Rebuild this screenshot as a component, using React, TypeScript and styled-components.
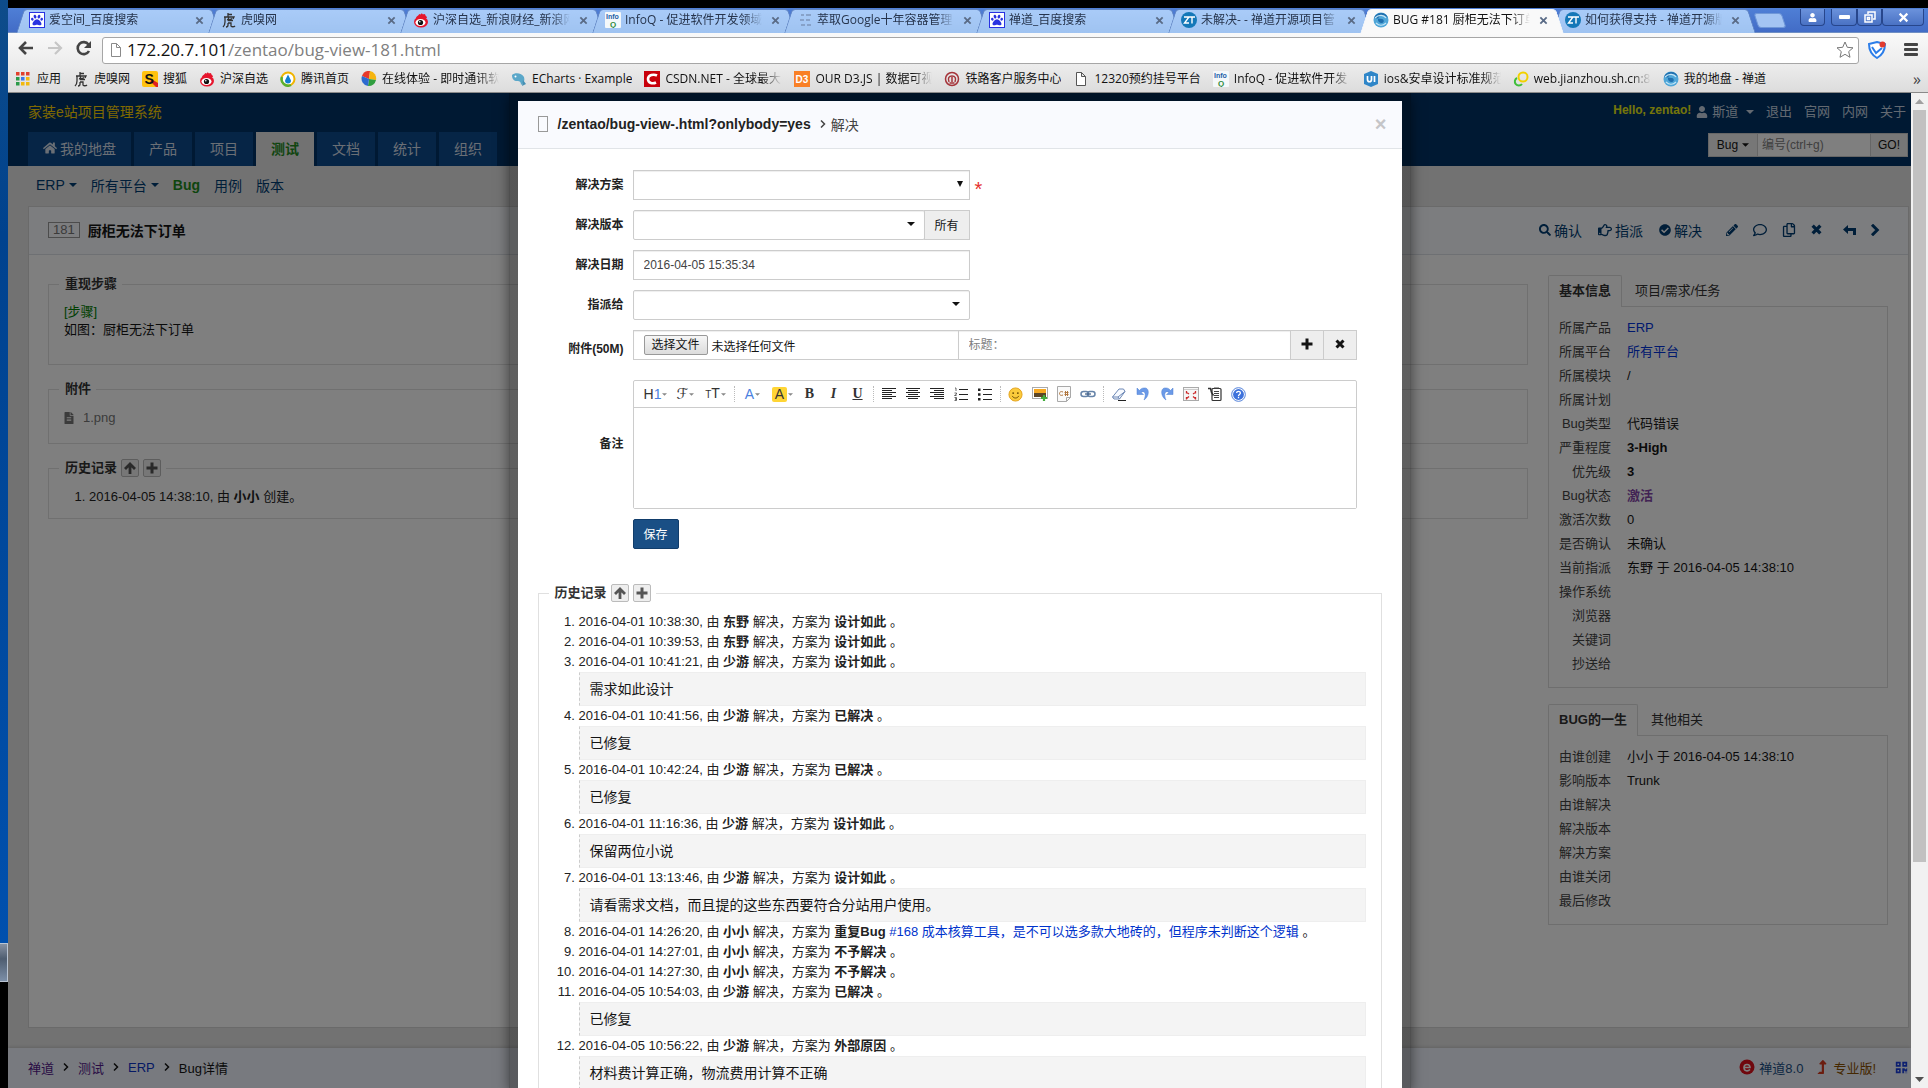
import React, { useRef } from "react";
import styled, { createGlobalStyle, css } from "styled-components";
import {
  FaHome, FaUser, FaSearch, FaRegHandPointRight, FaCheckCircle, FaPencilAlt, FaRegComment,
  FaRegCopy, FaFileAlt, FaPaw, FaLevelUpAlt, FaQrcode,
} from "react-icons/fa";

const Global = createGlobalStyle`
  *, *::before, *::after { box-sizing: border-box; }
  body { margin: 0; background: #000; font-family: "Liberation Sans", "Noto Sans CJK SC", sans-serif; font-size: 13px; color: #141414; }
  button, input, select, textarea { font-family: inherit; font-size: 12px; color: inherit; margin: 0; }
  ul, ol, p, h1, h2 { margin: 0; padding: 0; }
  a { text-decoration: none; color: inherit; }
  svg { flex-shrink: 0; }
`;

/* ---------- desktop and browser window ---------- */

const Screen = styled.div`
  display: flex;
  height: 100vh;
  overflow: hidden;
  background: #000;
`;
const Desktop = styled.div`
  flex: 0 0 8px;
  display: flex;
  flex-direction: column;
`;
const Wallpaper = styled.div`
  flex: 1;
  background: linear-gradient(#0e4c8a, #00428e 25%, #0050ae);
`;
const TaskButton = styled.div`
  height: 39px;
  border: 1px solid #b9c4d2;
  border-left: 0;
  background: linear-gradient(#8792a3, #4e5d70 40%, #7c8fa8);
`;
const TaskbarEnd = styled.div`
  height: 106px;
  background: #000;
`;
const Browser = styled.div`
  flex: 1;
  min-width: 0;
  display: flex;
  flex-direction: column;
  padding-top: 8px;
  font-family: "Open Sans", "Noto Sans CJK SC", sans-serif;
  font-size: 12px;
`;
const TabStrip = styled.div`
  display: flex;
  justify-content: space-between;
  height: 25px;
  padding: 1px 4px 0 8px;
  background: linear-gradient(#4f7fd6, #426cc6);
  border-bottom: 1px solid #6f8fc4;
`;
const TabList = styled.div`
  display: flex;
  flex: 1;
  min-width: 0;
`;
const skewSide = css<{ $active?: boolean }>`
  content: "";
  position: absolute;
  z-index: -1;
  top: 0;
  bottom: ${(p) => (p.$active ? "-1px" : "0")};
  border: 1px solid ${(p) => (p.$active ? "#f4f6fa" : "#6387c4")};
  border-bottom: 0;
  background: ${(p) => (p.$active ? "#f9f9f9" : "linear-gradient(#a9cbf8, #9fc3f1)")};
`;
const BrowserTab = styled.div<{ $active?: boolean }>`
  position: relative;
  z-index: ${(p) => (p.$active ? 2 : 1)};
  display: flex;
  align-items: center;
  flex: 0 1 204px;
  width: 204px;
  height: 24px;
  margin-right: -12px;
  padding: 0 16px 2px 13px;
  color: ${(p) => (p.$active ? "#111" : "#26344c")};
  &::before {
    ${skewSide}
    left: 4px;
    right: 40%;
    border-right: 0;
    border-top-left-radius: 4px;
    transform: skewX(-18deg);
  }
  &::after {
    ${skewSide}
    left: 40%;
    right: 4px;
    border-left: 0;
    border-top-right-radius: 4px;
    transform: skewX(18deg);
  }
`;
const TabTitle = styled.span`
  flex: 1;
  min-width: 0;
  margin: 0 8px 0 4px;
  overflow: hidden;
  white-space: nowrap;
  line-height: 20px;
  mask-image: linear-gradient(to right, #000 calc(100% - 18px), transparent);
`;
const TabClose = styled.button`
  display: flex;
  align-items: center;
  justify-content: center;
  width: 10px;
  height: 14px;
  padding: 0;
  border: 0;
  background: none;
  color: #5a6b86;
`;
const NewTab = styled.button`
  align-self: center;
  width: 28px;
  height: 15px;
  margin-left: 12px;
  border: 1px solid #6f97d8;
  border-radius: 3px;
  background: #a3c4f3;
  transform: skewX(18deg);
`;
const WindowButtons = styled.div`
  display: flex;
  height: 17px;
  color: #fff;
`;
const WindowButton = styled.button<{ $w: number; $gap?: boolean }>`
  width: ${(p) => p.$w}px;
  margin-right: ${(p) => (p.$gap ? 6 : 0)}px;
  padding: 0;
  border: 1px solid #27468c;
  border-top: 0;
  border-radius: 0 0 4px 4px;
  background: linear-gradient(#6b92dc, #4a72c4);
  color: #fff;
  display: flex;
  align-items: center;
  justify-content: center;
`;
const Toolbar = styled.div`
  display: flex;
  align-items: center;
  height: 34px;
  padding: 0 10px 0 10px;
  background: linear-gradient(#f9f9f9, #ebebeb);
`;
const NavButton = styled.button`
  width: 29px;
  height: 24px;
  padding: 0;
  border: 0;
  background: none;
  text-align: left;
`;
const Omnibox = styled.label`
  display: flex;
  align-items: center;
  flex: 1;
  height: 27px;
  margin: 0 9px 0 -3px;
  padding: 0 4px 0 7px;
  border: 1px solid #a6a6a6;
  border-radius: 3px;
  background: #fff;
`;
const Url = styled.span`
  flex: 1;
  margin-left: 5px;
  font-size: 17px;
  line-height: 24px;
  color: #808080;
`;
const UrlHost = styled.span`
  color: #111;
`;
const MenuButton = styled.button`
  width: 24px;
  margin-left: 8px;
  padding: 0;
  border: 0;
  background: none;
  display: flex;
  justify-content: flex-end;
`;
const Bookmarks = styled.nav`
  display: flex;
  align-items: center;
  gap: 12px;
  height: 26px;
  padding: 0 7px 2px 8px;
  background: linear-gradient(#ebebeb, #dcdcdc);
  border-bottom: 1px solid #8a8a8a;
`;
const Bookmark = styled.a`
  display: flex;
  align-items: center;
  gap: 5px;
  line-height: 20px;
  color: #111;
  white-space: nowrap;
`;
const BookmarkIcon = styled.span`
  display: flex;
  justify-content: center;
  width: 16px;
`;
const BookmarkText = styled.span<{ $fade?: boolean }>`
  overflow: hidden;
  ${(p) =>
    p.$fade &&
    css`
      width: 117px;
      mask-image: linear-gradient(to right, #000 calc(100% - 20px), transparent);
    `}
`;
const More = styled.button`
  margin-left: auto;
  padding: 0;
  border: 0;
  background: none;
  font-size: 16px;
  line-height: 20px;
  color: #444;
`;
const Viewport = styled.div`
  flex: 1;
  min-height: 0;
  display: flex;
`;
const ScrollTrack = styled.div`
  flex: 0 0 17px;
  display: flex;
  flex-direction: column;
  align-items: center;
  background: #f1f1f1;
`;
const ScrollArrow = styled.svg`
  width: 9px;
  height: 17px;
`;
const ScrollThumb = styled.div`
  flex: 752;
  width: 13px;
  background: #c1c1c1;
`;
const ScrollRest = styled.div`
  flex: 209;
`;

/* ---------- page ---------- */

const Page = styled.div`
  position: relative;
  flex: 1;
  min-width: 0;
  display: flex;
  flex-direction: column;
  overflow: hidden;
  background: #e5e5e5;
  font-family: "Liberation Sans", "Noto Sans CJK SC", sans-serif;
  font-size: 13px;
`;
const PageHeader = styled.header`
  padding: 0 3px 0 20px;
  background: #003366;
`;
const HeaderRow = styled.div<{ $h: number }>`
  display: flex;
  align-items: center;
  justify-content: space-between;
  height: ${(p) => p.$h}px;
`;
const Brand = styled.h1`
  padding-bottom: 2px;
  font-size: 14px;
  font-weight: 400;
  line-height: 20px;
  color: #ffd200;
`;
const UserLinks = styled.div`
  display: flex;
  align-items: center;
  gap: 12px;
  padding: 0 2px 2px 0;
  line-height: 20px;
  color: #c6d3e2;
`;
const Hello = styled.strong`
  margin-right: -7px;
  padding-bottom: 3px;
  font-size: 12px;
  line-height: 16px;
  color: #eaea14;
`;
const IconLink = styled.a<{ $gap?: number }>`
  display: inline-flex;
  align-items: center;
  gap: ${(p) => p.$gap ?? 4}px;
`;
const MainNav = styled.nav`
  display: flex;
  gap: 3px;
  align-self: stretch;
`;
const MainLink = styled.a<{ $active?: boolean }>`
  display: flex;
  align-items: center;
  gap: 3px;
  padding: 0 15px 2px;
  font-size: 14px;
  font-weight: ${(p) => (p.$active ? 700 : 400)};
  color: ${(p) => (p.$active ? "#1f8a1f" : "#d5dfea")};
  background: ${(p) => (p.$active ? "#e5e5e5" : "#0d4a8c")};
`;
const SearchBox = styled.form`
  display: flex;
  height: 24px;
  margin-bottom: 8px;
`;
const SearchButton = styled.button<{ $w: number }>`
  display: flex;
  align-items: center;
  justify-content: center;
  gap: 4px;
  width: ${(p) => p.$w}px;
  padding: 0;
  border: 1px solid #ccc;
  background: #efefef;
`;
const SearchInput = styled.input`
  width: 112px;
  padding: 0 4px;
  border: 1px solid #ccc;
  border-width: 1px 0;
  background: #fff;
  &::placeholder { color: #808080; }
`;
const SubNav = styled.nav`
  display: flex;
  align-items: center;
  gap: 14px;
  height: 40px;
  padding: 0 0 2px 28px;
  font-size: 14px;
  color: #003d73;
`;
const SubLink = styled(IconLink)<{ $active?: boolean }>`
  font-weight: ${(p) => (p.$active ? 700 : 400)};
  color: ${(p) => (p.$active ? "#1d8a1d" : "inherit")};
`;
const Panel = styled.main`
  flex: 1;
  min-height: 0;
  margin: 0 2px 20px 20px;
  border: 1px solid #d4d4d4;
  background: #fff;
  overflow: hidden;
`;
const PanelHead = styled.div`
  display: flex;
  align-items: center;
  justify-content: space-between;
  height: 48px;
  padding: 0 27px 2px 19px;
  border-bottom: 1px solid #dde1e6;
  background: #f8fafe;
`;
const BugTitle = styled.h2`
  display: flex;
  align-items: center;
  gap: 8px;
  font-size: 14px;
`;
const BugId = styled.span`
  padding: 0 4px;
  border: 1px solid #999;
  font-size: 13px;
  font-weight: 400;
  line-height: 14px;
  color: #777;
`;
const Actions = styled.div`
  display: flex;
  align-items: center;
  gap: 16px;
  font-size: 14px;
  color: #003d73;
`;
const ActionIcons = styled.div<{ $gap: number; $lead: number }>`
  display: flex;
  align-items: center;
  gap: ${(p) => p.$gap}px;
  margin-left: ${(p) => p.$lead}px;
`;
const PanelBody = styled.div`
  display: flex;
  gap: 20px;
  padding: 20px 20px 20px 19px;
`;
const MainColumn = styled.div`
  flex: 1;
  min-width: 0;
  display: flex;
  flex-direction: column;
  gap: 15px;
`;
const Fieldset = styled.fieldset<{ $tail?: number }>`
  min-width: 0;
  margin: 0;
  padding: 10px 15px ${(p) => p.$tail ?? 11}px 10px;
  border: 1px solid #e0e0e0;
`;
const Legend = styled.legend`
  display: flex;
  align-items: center;
  gap: 4px;
  height: 18px;
  padding: 0 5px 0 6px;
  font-size: 13px;
  font-weight: 700;
  line-height: 18px;
  color: #333;
`;
const TinyButton = styled.button`
  display: flex;
  align-items: center;
  justify-content: center;
  width: 18px;
  height: 18px;
  padding: 0;
  border: 1px solid #bbb;
  border-radius: 2px;
  background: #eee;
  color: #555;
`;
const StepText = styled.p<{ $green?: boolean }>`
  padding-left: 5px;
  line-height: 18px;
  color: ${(p) => (p.$green ? "#008000" : "inherit")};
`;
const FileLink = styled.a`
  display: flex;
  align-items: center;
  gap: 8px;
  padding: 1px 0 0 4px;
  line-height: 18px;
  color: #777;
`;
const HistoryList = styled.ol`
  padding-left: 30px;
  line-height: 20px;
  color: #222;
`;
const Side = styled.aside`
  flex: 0 0 340px;
  display: flex;
  flex-direction: column;
  gap: 16px;
`;
const SideTabs = styled.div`
  display: flex;
  gap: 2px;
  height: 32px;
  margin-bottom: -1px;
`;
const SideTab = styled.button<{ $active?: boolean }>`
  position: relative;
  padding: 0 10px 4px;
  border: 1px solid ${(p) => (p.$active ? "#ddd" : "transparent")};
  border-bottom: 0;
  border-radius: 2px 2px 0 0;
  background: ${(p) => (p.$active ? "#fff" : "none")};
  font-size: 13px;
  font-weight: ${(p) => (p.$active ? 700 : 400)};
  color: #333;
`;
const SideBox = styled.div`
  padding: 9px 10px 11px;
  border: 1px solid #ddd;
`;
const InfoTable = styled.table`
  width: 100%;
  border-collapse: collapse;
  line-height: 24px;
  th, td { padding: 0; height: 24px; }
  th { width: 52px; text-align: right; font-weight: 400; white-space: nowrap; color: #444; }
  td { padding-left: 16px; color: #141414; }
`;
const Value = styled.span<{ $kind?: "link" | "bold" | "status" }>`
  color: ${(p) => (p.$kind === "link" ? "#0033dd" : p.$kind === "status" ? "#8547a8" : "inherit")};
  font-weight: ${(p) => (p.$kind === "bold" || p.$kind === "status" ? 700 : 400)};
`;
const Footer = styled.footer`
  display: flex;
  align-items: center;
  justify-content: space-between;
  height: 40px;
  padding: 0 3px 2px 20px;
  background: #f0f5ff;
  box-shadow: 0 -1px 3px rgba(0, 0, 0, 0.15);
`;
const Crumbs = styled.div`
  display: flex;
  align-items: center;
  gap: 8px;
`;
const CrumbLink = styled.a<{ $visited?: boolean }>`
  color: ${(p) => (p.$visited ? "#551a8b" : "#0a32c8")};
`;
const FooterLinks = styled.div`
  display: flex;
  align-items: center;
  gap: 12px;
  color: #1a4f85;
`;
const ProLink = styled(IconLink)`
  margin-right: 7px;
  color: #8a5000;
`;

/* ---------- modal ---------- */

const Backdrop = styled.div`
  position: absolute;
  inset: 0;
  display: flex;
  justify-content: center;
  overflow: hidden;
  background: rgba(0, 0, 0, 0.5);
`;
const ModalFrame = styled.div`
  width: 902px;
  max-width: 100%;
  flex-shrink: 0;
  padding: 8px 8px 0;
  border: 1px solid rgba(0, 0, 0, 0.3);
  border-width: 0 1px;
  background: linear-gradient(rgba(0, 0, 0, 0.25), rgba(0, 0, 0, 0.25)) padding-box;
  box-shadow: 0 4px 12px rgba(0, 0, 0, 0.5);
`;
const Dialog = styled.section`
  min-height: 100%;
  background: #fff;
`;
const DialogHead = styled.header`
  display: flex;
  align-items: center;
  height: 48px;
  padding: 0 15px 2px 20px;
  border-bottom: 1px solid #e1e4e8;
  background: #f9fafe;
  font-size: 14px;
`;
const MissingGlyph = styled.span`
  width: 10px;
  height: 16px;
  margin-right: 10px;
  border: 1px solid #999;
`;
const DialogTitle = styled.h2`
  font-size: 14px;
  color: #222;
`;
const DialogSub = styled.span`
  display: flex;
  align-items: center;
  gap: 4px;
  margin-left: 8px;
  color: #444;
`;
const DialogClose = styled.button`
  margin-left: auto;
  padding: 0;
  border: 0;
  background: none;
  font-size: 20px;
  font-weight: 700;
  line-height: 20px;
  color: #c5c5c8;
`;
const DialogBody = styled.div`
  padding: 21px 20px 0;
`;
const Form = styled.form`
  display: grid;
  grid-template-columns: 86px 1fr;
  gap: 10px 9px;
  align-items: center;
  margin: 0 25px 35px 0;
`;
const Label = styled.label<{ $low?: boolean }>`
  padding-top: ${(p) => (p.$low ? 8 : 0)}px;
  text-align: right;
  font-size: 12px;
  font-weight: 700;
  line-height: 20px;
  color: #222;
`;
const Field = styled.div`
  display: flex;
  align-items: center;
  gap: 5px;
`;
const Group = styled.div`
  display: flex;
  width: 337px;
`;
const WideGroup = styled.div`
  display: flex;
  flex: 1;
`;
const SelectWrap = styled.div`
  position: relative;
  flex: 1;
  display: flex;
`;
const box = css`
  height: 30px;
  border: 1px solid #ccc;
  background: #fff;
  box-shadow: inset 0 1px 1px rgba(0, 0, 0, 0.07);
`;
const Select = styled.select<{ $round?: boolean }>`
  ${box}
  flex: 1;
  padding: 0 10px;
  border-radius: ${(p) => (p.$round ? 2 : 0)}px;
  appearance: none;
`;
const SelectArrow = styled.svg<{ $right: number }>`
  position: absolute;
  top: 10px;
  right: ${(p) => p.$right}px;
  width: 8px;
  height: 8px;
  pointer-events: none;
`;
const TextInput = styled.input`
  ${box}
  flex: 1;
  min-width: 0;
  padding: 0 10px;
  color: #444;
`;
const TitleInput = styled(TextInput)`
  margin-left: -1px;
  padding: 0 10px;
  &::placeholder { color: #808080; }
`;
const AddonButton = styled.button<{ $w: number }>`
  display: flex;
  align-items: center;
  justify-content: center;
  width: ${(p) => p.$w}px;
  height: 30px;
  margin-left: -1px;
  padding: 0 0 2px;
  border: 1px solid #ccc;
  background: #eee;
`;
const Required = styled.span`
  padding-top: 7px;
  font-size: 20px;
  line-height: 20px;
  color: #e5322d;
`;
const FileField = styled.div`
  ${box}
  display: flex;
  align-items: center;
  gap: 4px;
  flex: 0 0 326px;
  padding: 0 10px;
  font-size: 12px;
`;
const FileInput = styled.input`
  display: none;
`;
const FileButton = styled.button`
  width: 64px;
  height: 20px;
  padding: 0;
  border: 1px solid #999;
  border-radius: 2px;
  background: linear-gradient(#f6f6f6, #dcdcdc);
  line-height: 18px;
`;
const Editor = styled.div`
  margin-top: 10px;
  border: 1px solid #ccc;
  border-radius: 2px;
`;
const EditorBar = styled.div`
  display: flex;
  align-items: center;
  height: 27px;
  padding-left: 7px;
  border-bottom: 1px solid #ccc;
`;
const EditorButton = styled.button<{ $menu?: boolean }>`
  display: flex;
  align-items: center;
  justify-content: center;
  gap: 1px;
  width: ${(p) => (p.$menu ? 30 : 24)}px;
  height: 22px;
  padding: 0;
  border: 0;
  background: none;
  font-size: 14px;
  line-height: 20px;
  color: #333;
`;
const Divider = styled.span`
  width: 1px;
  height: 16px;
  margin: 0 3px;
  border-left: 1px dotted #bbb;
`;
const Tint = styled.span`
  color: #4a7fe0;
`;
const Swatch = styled.span`
  width: 15px;
  border-radius: 2px;
  background: #ffd535;
  line-height: 15px;
`;
const Small = styled.span`
  font-size: 10px;
`;
const Script = styled.span`
  font-family: "DejaVu Sans", sans-serif;
  font-size: 15px;
`;
const Serif = styled.b<{ $italic?: boolean; $line?: boolean }>`
  font-family: "Liberation Serif", serif;
  font-style: ${(p) => (p.$italic ? "italic" : "normal")};
  text-decoration: ${(p) => (p.$line ? "underline" : "none")};
`;
const EditorText = styled.textarea`
  display: block;
  width: 100%;
  height: 100px;
  padding: 4px;
  border: 0;
  resize: none;
  background: #fff;
`;
const SaveButton = styled.button`
  grid-column: 2;
  justify-self: start;
  width: 46px;
  height: 30px;
  padding: 0 0 2px;
  border: 1px solid #113d6b;
  border-radius: 2px;
  background: #1a4f85;
  color: #fff;
`;
const Comment = styled.div`
  height: 34px;
  padding: 0 10px;
  border: 1px solid #eee;
  border-left: 1px dashed #ccc;
  background: #f4f4f4;
  font-size: 14px;
  line-height: 32px;
  color: #141414;
`;
const RecordLink = styled.a`
  color: #0033cc;
`;

/* ---------- drawings ---------- */

const Glyph = ({ s = 16, children }: { s?: number; children: React.ReactNode }) => (
  <svg width={s} height={s} viewBox="0 0 16 16" fill="none">{children}</svg>
);
const SvgText = styled.text`
  font-family: "Liberation Sans", sans-serif;
  font-weight: 700;
`;

const BaiduIcon = () => (
  <Glyph><rect x="0.5" y="0.5" width="15" height="15" fill="#fff" stroke="#2932e1" /><FaPaw x={2} y={2} size={12} color="#2932e1" /></Glyph>
);
const TigerIcon = () => (
  <Glyph>
    <path d="M7 1v4M7 2.500h4M3 5h10l-1 2M4 5v5c0 2-1 4-2 5M6 7.500c2 .5 4 0 5-1M7.500 5.500v3h4.500M7 11v2c0 1-1 2-2 2M7 11h3v3c0 1 3 1 4 0" stroke="#333" strokeWidth="1.300" />
  </Glyph>
);
const SinaIcon = () => (
  <Glyph>
    <path d="M3 6C4 3 6 4 6 2c2 1 2 0 3-1 0 2 2 1 3 1 0 2 2 2 2 4z" fill="#e6162d" />
    <ellipse cx="8" cy="10" rx="7" ry="5.500" fill="#e6162d" /><ellipse cx="7.500" cy="10.500" rx="5" ry="3.500" fill="#fff" />
    <circle cx="7.500" cy="10.500" r="2.600" fill="#111" /><circle cx="6.800" cy="9.800" r="0.800" fill="#fff" />
  </Glyph>
);
const InfoQIcon = () => (
  <Glyph>
    <rect width="16" height="16" rx="1" fill="#f4f8fa" />
    <SvgText x="1" y="7" fontSize="7" fill="#1d5fa8">Info</SvgText><SvgText x="5" y="15" fontSize="8" fill="#2e8b3a">Q</SvgText>
  </Glyph>
);
const LinesIcon = () => (
  <Glyph><path d="M4 3h3M9 3h5M3 8h4M9 8h4M4 13h4M10 13h4" stroke="#7d95bb" strokeWidth="1.500" /></Glyph>
);
const ZtIcon = () => (
  <Glyph><circle cx="8" cy="8" r="8" fill="#1478b8" /><path d="M3 5h5L3.500 11H8M8 5h6M11 5v6.500" stroke="#fff" strokeWidth="1.400" /></Glyph>
);
const WaveIcon = () => (
  <Glyph>
    <circle cx="8" cy="8" r="7.500" fill="#4fa6d8" />
    <path d="M1 6C3 0 13-1 15 6c-3-3-7-3-9-1s-1 6 2 6 4-3 1-4" fill="#1f6fae" />
    <path d="M2 6c4-4 9-3 11 0M3 11c3 3 7 3 10 0" stroke="#c5e6f7" strokeWidth="1.200" />
  </Glyph>
);
const AppsIcon = () => (
  <Glyph>
    {["#e2402c", "#e2402c", "#e2402c", "#2b9a49", "#3f79e8", "#f2b90f", "#2b9a49", "#f2b90f", "#f2b90f"].map((c, i) => (
      <rect key={i} x={(i % 3) * 5} y={1 + Math.floor(i / 3) * 5} width="3.500" height="3.500" fill={c} />
    ))}
  </Glyph>
);
const SohuIcon = () => (
  <Glyph><rect width="16" height="16" rx="2" fill="#ffc20e" /><path d="M8 10l6 6h2v-4l-5-3z" fill="#e02020" /><SvgText x="2.500" y="13" fontSize="14" fill="#111">S</SvgText></Glyph>
);
const TencentIcon = () => (
  <Glyph>
    <circle cx="8" cy="8" r="6.500" fill="#fff" stroke="#f0b400" strokeWidth="2" /><path d="M2 6a6.500 6.500 0 0 0 9 8" stroke="#5ab031" strokeWidth="2.500" />
    <path d="M8 3.500l3 6a3 3 0 1 1-6 0z" fill="#0f7fd0" />
  </Glyph>
);
const BallIcon = () => (
  <Glyph><path d="M8 8L1 5a7.500 7.500 0 0 1 8-5z" fill="#e8392b" /><path d="M8 8l1-8a7.500 7.500 0 0 1 6 9z" fill="#f6b50f" /><path d="M8 8l7 1a8 8 0 0 1-8 6z" fill="#2f9e3f" /><path d="M8 8l-1 7A7.500 7.500 0 0 1 1 5z" fill="#2d6ad0" /></Glyph>
);
const WhaleIcon = () => (
  <Glyph><path d="M1 4c3-3 10-2 12 2 1 3 0 6-3 8 0-3-1-4-4-4S1 8 1 4z" fill="#5aa7c9" /><path d="M12 9l3 4-4 2z" fill="#4690b4" /><circle cx="4.500" cy="5.500" r="1" fill="#fff" /></Glyph>
);
const CsdnIcon = () => (
  <Glyph><rect width="16" height="16" fill="#c8000b" /><path d="M13 4.500C10 3 4 3.500 4 8s5 5 8 3.500" stroke="#fff" strokeWidth="2.600" /></Glyph>
);
const D3Icon = () => (
  <Glyph><rect width="16" height="16" fill="#f98026" /><SvgText x="1.500" y="12" fontSize="10" fill="#fff">D3</SvgText></Glyph>
);
const RailIcon = () => (
  <Glyph><circle cx="8" cy="8" r="6.500" stroke="#a5343a" strokeWidth="1.500" /><path d="M5 11c-1.500-4 0-6 3-6s4.500 2 3 6M8 6v5M5.500 12h5" stroke="#a5343a" strokeWidth="1.500" /></Glyph>
);
const PageIcon = ({ color = "#555" }: { color?: string }) => (
  <svg width="12" height="16" viewBox="0 0 12 16" fill="#fff" stroke={color}><path d="M1.500 1.500h5l4 4v9h-9zM6.500 1.500v4h4" /></svg>
);
const UiIcon = () => (
  <Glyph><path d="M8 0l7 3v10l-7 3-7-3V3z" fill="#2f86c8" /><path d="M4.500 5v3.500c0 3 4 3 4 0V5M11.500 5v6" stroke="#fff" strokeWidth="1.700" /></Glyph>
);
const RingsIcon = () => (
  <Glyph><circle cx="10" cy="6" r="4.500" stroke="#f2d100" strokeWidth="2" /><path d="M4 7a4 4 0 1 0 5 6" stroke="#3fbf3a" strokeWidth="2" /></Glyph>
);
const CrossIcon = ({ s = 10, w = 3 }: { s?: number; w?: number }) => (
  <svg width={s} height={s} viewBox="0 0 10 10"><path d="M1.500 1.500l7 7M8.500 1.500l-7 7" stroke="currentColor" strokeWidth={w} /></svg>
);
const PlusIcon = () => (
  <svg width="12" height="12" viewBox="0 0 12 12"><path d="M6 0.500v11M0.500 6h11" stroke="currentColor" strokeWidth="3" /></svg>
);
const UpIcon = () => (
  <svg width="12" height="12" viewBox="0 0 12 12"><path d="M6 12V3M1 7l5-5 5 5" fill="none" stroke="currentColor" strokeWidth="2.800" /></svg>
);
const RightIcon = ({ s = 8, w = 1.500 }: { s?: number; w?: number }) => (
  <svg width={s} height={s} viewBox="0 0 8 8"><path d="M2 0.500L5.500 4 2 7.500" fill="none" stroke="currentColor" strokeWidth={w} /></svg>
);
const DownCaret = ({ s = 7 }: { s?: number }) => (
  <svg width={s} height="4" viewBox="0 0 8 4"><path d="M0 0h8L4 4z" fill="currentColor" /></svg>
);
const GreyCaret = () => (
  <svg width="5" height="3" viewBox="0 0 6 3"><path d="M0 0h6L3 3z" fill="#888" /></svg>
);
const ReplyIcon = () => (
  <svg width="13" height="12" viewBox="0 0 13 12" fill="currentColor"><path d="M5 1v3h8v7h-3V7H5v3L0 5.500z" /></svg>
);
const AlignIcon = ({ kind }: { kind: "left" | "center" | "right" }) => (
  <svg width="14" height="12" viewBox="0 0 14 12">
    {[0, 1, 2, 3, 4, 5].map((i) => {
      const w = i % 2 ? 10 : 14;
      const x = kind === "left" ? 0 : kind === "right" ? 14 - w : (14 - w) / 2;
      return <rect key={i} x={x} y={i * 2} width={w} height="1" fill="#222" />;
    })}
  </svg>
);
const OrderedIcon = () => (
  <svg width="14" height="14" viewBox="0 0 14 14">
    <path d="M5 2.500h9M5 7.500h9M5 12.500h9" stroke="#222" /><path d="M1 1h1v3M.5 6h2v1.200l-2 1.300h2M.5 10.500h2v1.500h-1.500h1.500v1.500h-2" stroke="#444" fill="none" strokeWidth=".8" />
  </svg>
);
const BulletIcon = () => (
  <svg width="14" height="14" viewBox="0 0 14 14"><path d="M5 2.500h9M5 7.500h9M5 12.500h9" stroke="#222" /><path d="M0 1.500h2.500v2.500h-2.500zM0 6.200h2.500v2.500h-2.500zM0 11h2.500v2.500h-2.500z" fill="#222" /></svg>
);
const SmileIcon = () => (
  <Glyph s={15}><circle cx="8" cy="8" r="7" fill="#fbcb3c" stroke="#e2a11c" /><circle cx="5.500" cy="6.500" r="1" fill="#6b4a00" /><circle cx="10.500" cy="6.500" r="1" fill="#6b4a00" /><path d="M4.500 9.500c1.500 3 5.500 3 7 0" stroke="#6b4a00" /></Glyph>
);
const PictureIcon = () => (
  <Glyph><rect x=".5" y="1.500" width="15" height="11" fill="#fff" stroke="#aaa" /><rect x="2" y="3" width="12" height="4.500" fill="#f6a821" /><rect x="2" y="7" width="12" height="4" fill="#5b4526" /><path d="M12 9v6M9 12h6" stroke="#44ad3e" strokeWidth="2.200" /></Glyph>
);
const CodeIcon = () => (
  <Glyph><path d="M1.500.5h13v11l-4 4h-9z" fill="#fafafa" stroke="#a9a9a9" /><path d="M10.500 15.500v-4h4" stroke="#a9a9a9" /><path d="M7 6C5 5 3.500 6 3.500 7.500S5 10 7 9M9.500 5v5M11.500 5v5M8.500 6.500h4M8.500 8.500h4" stroke="#b0763e" /></Glyph>
);
const LinkIcon = () => (
  <Glyph><rect x="1" y="5.500" width="7.500" height="5" rx="2.500" stroke="#6583a8" strokeWidth="1.500" /><rect x="7.500" y="5.500" width="7.500" height="5" rx="2.500" stroke="#6583a8" strokeWidth="1.500" /><path d="M5 8h6" stroke="#48658c" strokeWidth="1.300" /></Glyph>
);
const EraserIcon = () => (
  <Glyph><path d="M1.500 11L8 3h4.500l1.500 2.500L8.500 13H3z" fill="#f7faff" stroke="#6c87b5" /><path d="M1.500 11H7l1.500 2M7 11l7-5.500" stroke="#6c87b5" /><path d="M7 14.500h8" stroke="#222" /></Glyph>
);
const UndoIcon = ({ flip }: { flip?: boolean }) => (
  <Glyph><g transform={flip ? "translate(16 0) scale(-1 1)" : undefined}><path d="M2 2v6.500h6.500L6 6.500c3-2.500 6 .5 3 7.500C15 10 14.500 1 9 2 7 2 5.500 3 4.500 4.500z" fill="#6b9ae8" stroke="#4d7ed0" strokeWidth=".5" /></g></Glyph>
);
const FullIcon = () => (
  <Glyph><rect x=".5" y="1.500" width="15" height="13" fill="#f7f7f7" stroke="#aaa" /><path d="M1 3.500h14" stroke="#ccc" /><path d="M3 6l3 2M13 6l-3 2M3 13l3-2.500M13 13l-3-2.500M3.500 5v2.500M12.500 5v2.500M3.500 11v2.500M12.500 11v2.500" stroke="#cc2b2b" strokeWidth="1.300" /></Glyph>
);
const PasteIcon = () => (
  <Glyph><rect x="5" y="2.500" width="9" height="12" rx="1" fill="#fff" stroke="#333" strokeWidth="1.200" /><path d="M7 2h5M7 5.500h5M7 7.500h5M7 9.500h5M7 11.500h5" stroke="#444" /><path d="M1 2.500h2.500l1 4 2 3" stroke="#333" strokeWidth="1.500" /></Glyph>
);
const HelpIcon = () => (
  <Glyph s={15}><circle cx="8" cy="8" r="7.300" fill="#fff" stroke="#4a7bd8" /><circle cx="8" cy="8" r="5.800" fill="#3d72dc" /><path d="M6 6.500c0-2.500 4-2.500 4 0 0 1.500-2 1.500-2 3M8 10.500v1.500" stroke="#fff" strokeWidth="1.400" /></Glyph>
);

/* ---------- data ---------- */

const tabs = [
  { icon: <BaiduIcon />, title: "爱空间_百度搜索" },
  { icon: <TigerIcon />, title: "虎嗅网" },
  { icon: <SinaIcon />, title: "沪深自选_新浪财经_新浪网" },
  { icon: <InfoQIcon />, title: "InfoQ - 促进软件开发领域" },
  { icon: <LinesIcon />, title: "萃取Google十年容器管理" },
  { icon: <BaiduIcon />, title: "禅道_百度搜索" },
  { icon: <ZtIcon />, title: "未解决- - 禅道开源项目管" },
  { icon: <WaveIcon />, title: "BUG #181 厨柜无法下订单", active: true },
  { icon: <ZtIcon />, title: "如何获得支持 - 禅道开源版" },
];
const bookmarks = [
  { icon: <AppsIcon />, text: "应用" },
  { icon: <TigerIcon />, text: "虎嗅网" },
  { icon: <SohuIcon />, text: "搜狐" },
  { icon: <SinaIcon />, text: "沪深自选" },
  { icon: <TencentIcon />, text: "腾讯首页" },
  { icon: <BallIcon />, text: "在线体验 - 即时通讯软", fade: true },
  { icon: <WhaleIcon />, text: "ECharts · Example" },
  { icon: <CsdnIcon />, text: "CSDN.NET - 全球最大", fade: true },
  { icon: <D3Icon />, text: "OUR D3.JS | 数据可视", fade: true },
  { icon: <RailIcon />, text: "铁路客户服务中心" },
  { icon: <PageIcon />, text: "12320预约挂号平台" },
  { icon: <InfoQIcon />, text: "InfoQ - 促进软件开发", fade: true },
  { icon: <UiIcon />, text: "ios&安卓设计标准规范", fade: true },
  { icon: <RingsIcon />, text: "web.jianzhou.sh.cn:8", fade: true },
  { icon: <WaveIcon />, text: "我的地盘 - 禅道" },
];
type Info = [string, string?, ("link" | "bold" | "status")?];
const basicInfo: Info[] = [
  ["所属产品", "ERP", "link"], ["所属平台", "所有平台", "link"], ["所属模块", "/"], ["所属计划"],
  ["Bug类型", "代码错误"], ["严重程度", "3-High", "bold"], ["优先级", "3", "bold"], ["Bug状态", "激活", "status"],
  ["激活次数", "0"], ["是否确认", "未确认"], ["当前指派", "东野 于 2016-04-05 14:38:10"], ["操作系统"],
  ["浏览器"], ["关键词"], ["抄送给"],
];
const lifeInfo: Info[] = [
  ["由谁创建", "小小 于 2016-04-05 14:38:10"], ["影响版本", "Trunk"], ["由谁解决"], ["解决版本"],
  ["解决方案"], ["由谁关闭"], ["最后修改"],
];
const records: { at: string; who: string; how: string; link?: string; note?: string }[] = [
  { at: "2016-04-01 10:38:30", who: "东野", how: "设计如此" },
  { at: "2016-04-01 10:39:53", who: "东野", how: "设计如此" },
  { at: "2016-04-01 10:41:21", who: "少游", how: "设计如此", note: "需求如此设计" },
  { at: "2016-04-01 10:41:56", who: "少游", how: "已解决", note: "已修复" },
  { at: "2016-04-01 10:42:24", who: "少游", how: "已解决", note: "已修复" },
  { at: "2016-04-01 11:16:36", who: "少游", how: "设计如此", note: "保留两位小说" },
  { at: "2016-04-01 13:13:46", who: "少游", how: "设计如此", note: "请看需求文档，而且提的这些东西要符合分站用户使用。" },
  { at: "2016-04-01 14:26:20", who: "小小", how: "重复Bug", link: "#168 成本核算工具，是不可以选多款大地砖的，但程序未判断这个逻辑" },
  { at: "2016-04-01 14:27:01", who: "小小", how: "不予解决" },
  { at: "2016-04-01 14:27:30", who: "小小", how: "不予解决" },
  { at: "2016-04-05 10:54:03", who: "少游", how: "已解决", note: "已修复" },
  { at: "2016-04-05 10:56:22", who: "少游", how: "外部原因", note: "材料费计算正确，物流费用计算不正确" },
];

/* ---------- parts ---------- */

const HistoryLegend = () => (
  <Legend>
    历史记录
    <TinyButton type="button" aria-label="排序"><UpIcon /></TinyButton>
    <TinyButton type="button" aria-label="展开"><PlusIcon /></TinyButton>
  </Legend>
);

const InfoBlock = ({ names, rows }: { names: [string, string]; rows: Info[] }) => (
  <div>
    <SideTabs>
      <SideTab type="button" $active>{names[0]}</SideTab>
      <SideTab type="button">{names[1]}</SideTab>
    </SideTabs>
    <SideBox>
      <InfoTable>
        <tbody>
          {rows.map(([name, value, kind]) => (
            <tr key={name}>
              <th scope="row">{name}</th>
              <td>{kind === "link" ? <Value as="a" href="#" $kind="link">{value}</Value> : <Value $kind={kind}>{value}</Value>}</td>
            </tr>
          ))}
        </tbody>
      </InfoTable>
    </SideBox>
  </div>
);

const BugPage = () => (
  <>
    <PageHeader>
      <HeaderRow $h={39}>
        <Brand>家装e站项目管理系统</Brand>
        <UserLinks>
          <Hello>Hello, zentao!</Hello>
          <IconLink href="#"><FaUser size={12} />斯道<IconLink as="span" $gap={0}>&nbsp;<DownCaret s={8} /></IconLink></IconLink>
          <a href="#">退出</a><a href="#">官网</a><a href="#">内网</a><a href="#">关于</a>
        </UserLinks>
      </HeaderRow>
      <HeaderRow $h={34}>
        <MainNav>
          <MainLink href="#"><FaHome size={14} />我的地盘</MainLink>
          <MainLink href="#">产品</MainLink>
          <MainLink href="#">项目</MainLink>
          <MainLink href="#" $active>测试</MainLink>
          <MainLink href="#">文档</MainLink>
          <MainLink href="#">统计</MainLink>
          <MainLink href="#">组织</MainLink>
        </MainNav>
        <SearchBox>
          <SearchButton type="button" $w={50}>Bug<DownCaret /></SearchButton>
          <SearchInput aria-label="编号" placeholder="编号(ctrl+g)" />
          <SearchButton type="button" $w={38}>GO!</SearchButton>
        </SearchBox>
      </HeaderRow>
    </PageHeader>
    <SubNav>
      <SubLink href="#">ERP<DownCaret s={8} /></SubLink>
      <SubLink href="#">所有平台<DownCaret s={8} /></SubLink>
      <SubLink href="#" $active>Bug</SubLink>
      <SubLink href="#">用例</SubLink>
      <SubLink href="#">版本</SubLink>
    </SubNav>
    <Panel>
      <PanelHead>
        <BugTitle><BugId>181</BugId>厨柜无法下订单</BugTitle>
        <Actions>
          <IconLink href="#" $gap={3}><FaSearch size={12} />确认</IconLink>
          <IconLink href="#" $gap={3}><FaRegHandPointRight size={14} />指派</IconLink>
          <IconLink href="#" $gap={3}><FaCheckCircle size={12} />解决</IconLink>
          <ActionIcons $gap={15} $lead={8}>
            <FaPencilAlt size={12} /><FaRegComment size={14} /><FaRegCopy size={14} /><CrossIcon s={11} />
          </ActionIcons>
          <ActionIcons $gap={13} $lead={5}>
            <ReplyIcon /><RightIcon s={12} w={2} />
          </ActionIcons>
        </Actions>
      </PanelHead>
      <PanelBody>
        <MainColumn>
          <Fieldset $tail={25}>
            <Legend>重现步骤</Legend>
            <StepText $green>[步骤]</StepText>
            <StepText>如图：厨柜无法下订单</StepText>
          </Fieldset>
          <Fieldset $tail={16}>
            <Legend>附件</Legend>
            <FileLink href="#"><FaFileAlt size={12} />1.png</FileLink>
          </Fieldset>
          <Fieldset>
            <HistoryLegend />
            <HistoryList><li>2016-04-05 14:38:10, 由 <b>小小</b> 创建。</li></HistoryList>
          </Fieldset>
        </MainColumn>
        <Side>
          <InfoBlock names={["基本信息", "项目/需求/任务"]} rows={basicInfo} />
          <InfoBlock names={["BUG的一生", "其他相关"]} rows={lifeInfo} />
        </Side>
      </PanelBody>
    </Panel>
    <Footer>
      <Crumbs>
        <CrumbLink href="#" $visited>禅道</CrumbLink><RightIcon />
        <CrumbLink href="#" $visited>测试</CrumbLink><RightIcon />
        <CrumbLink href="#">ERP</CrumbLink><RightIcon />
        <span>Bug详情</span>
      </Crumbs>
      <FooterLinks>
        <IconLink href="#">
          <Glyph><circle cx="8" cy="8" r="7.500" fill="#e0101c" /><path d="M5 8.500h6c0-4-6-4-6 0s4 4 6 2" stroke="#fff" strokeWidth="1.600" /></Glyph>
          禅道8.0
        </IconLink>
        <ProLink href="#"><FaLevelUpAlt size={14} color="#d63a1e" />专业版!</ProLink>
        <FaQrcode size={13} color="#1a3fe0" />
      </FooterLinks>
    </Footer>
  </>
);

const ResolveDialog = () => {
  const picker = useRef<HTMLInputElement>(null);
  return (
    <Dialog role="dialog" aria-labelledby="dialog-title">
      <DialogHead>
        <MissingGlyph />
        <DialogTitle id="dialog-title">/zentao/bug-view-.html?onlybody=yes</DialogTitle>
        <DialogSub><RightIcon />解决</DialogSub>
        <DialogClose type="button" aria-label="关闭">×</DialogClose>
      </DialogHead>
      <DialogBody>
        <Form>
          <Label htmlFor="resolution">解决方案</Label>
          <Field>
            <Group>
              <SelectWrap>
                <Select id="resolution"><option /></Select>
                <SelectArrow $right={6} viewBox="0 0 8 8"><path d="M1 1h6L4 7z" fill="#111" /></SelectArrow>
              </SelectWrap>
            </Group>
            <Required>*</Required>
          </Field>
          <Label htmlFor="build">解决版本</Label>
          <Field>
            <Group>
              <SelectWrap>
                <Select id="build" $round><option /></Select>
                <SelectArrow $right={10} viewBox="0 0 8 8"><path d="M0 2h8L4 6z" fill="#111" /></SelectArrow>
              </SelectWrap>
              <AddonButton type="button" $w={46}>所有</AddonButton>
            </Group>
          </Field>
          <Label htmlFor="date">解决日期</Label>
          <Field><Group><TextInput id="date" defaultValue="2016-04-05 15:35:34" /></Group></Field>
          <Label htmlFor="assign">指派给</Label>
          <Field>
            <Group>
              <SelectWrap>
                <Select id="assign" $round><option /></Select>
                <SelectArrow $right={10} viewBox="0 0 8 8"><path d="M0 2h8L4 6z" fill="#111" /></SelectArrow>
              </SelectWrap>
            </Group>
          </Field>
          <Label htmlFor="file" $low>附件(50M)</Label>
          <Field>
            <WideGroup>
              <FileField>
                <FileInput id="file" type="file" ref={picker} />
                <FileButton type="button" onClick={() => picker.current?.click()}>选择文件</FileButton>
                未选择任何文件
              </FileField>
              <TitleInput aria-label="标题" placeholder="标题：" />
              <AddonButton type="button" $w={34} aria-label="添加"><PlusIcon /></AddonButton>
              <AddonButton type="button" $w={34} aria-label="删除"><CrossIcon /></AddonButton>
            </WideGroup>
          </Field>
          <Label htmlFor="comment" $low>备注</Label>
          <Editor>
            <EditorBar>
              <EditorButton type="button" $menu><span>H<Tint>1</Tint></span><GreyCaret /></EditorButton>
              <EditorButton type="button" $menu><Script>ℱ</Script><GreyCaret /></EditorButton>
              <EditorButton type="button" $menu><span><Small>T</Small>T</span><GreyCaret /></EditorButton>
              <Divider />
              <EditorButton type="button" $menu><Tint>A</Tint><GreyCaret /></EditorButton>
              <EditorButton type="button" $menu><Swatch>A</Swatch><GreyCaret /></EditorButton>
              <EditorButton type="button"><Serif>B</Serif></EditorButton>
              <EditorButton type="button"><Serif $italic>I</Serif></EditorButton>
              <EditorButton type="button"><Serif $line>U</Serif></EditorButton>
              <Divider />
              <EditorButton type="button" aria-label="左对齐"><AlignIcon kind="left" /></EditorButton>
              <EditorButton type="button" aria-label="居中"><AlignIcon kind="center" /></EditorButton>
              <EditorButton type="button" aria-label="右对齐"><AlignIcon kind="right" /></EditorButton>
              <EditorButton type="button" aria-label="编号"><OrderedIcon /></EditorButton>
              <EditorButton type="button" aria-label="项目符号"><BulletIcon /></EditorButton>
              <Divider />
              <EditorButton type="button" aria-label="表情"><SmileIcon /></EditorButton>
              <EditorButton type="button" aria-label="图片"><PictureIcon /></EditorButton>
              <EditorButton type="button" aria-label="代码"><CodeIcon /></EditorButton>
              <EditorButton type="button" aria-label="链接"><LinkIcon /></EditorButton>
              <Divider />
              <EditorButton type="button" aria-label="清除格式"><EraserIcon /></EditorButton>
              <EditorButton type="button" aria-label="撤销"><UndoIcon /></EditorButton>
              <EditorButton type="button" aria-label="重做"><UndoIcon flip /></EditorButton>
              <EditorButton type="button" aria-label="全屏"><FullIcon /></EditorButton>
              <EditorButton type="button" aria-label="源码"><PasteIcon /></EditorButton>
              <EditorButton type="button" aria-label="帮助"><HelpIcon /></EditorButton>
            </EditorBar>
            <EditorText id="comment" />
          </Editor>
          <SaveButton type="button">保存</SaveButton>
        </Form>
        <Fieldset>
          <HistoryLegend />
          <HistoryList>
            {records.map((r) => (
              <li key={r.at}>
                {r.at}, 由 <b>{r.who}</b> 解决，方案为 <b>{r.how}</b> {r.link && <><RecordLink href="#">{r.link}</RecordLink> </>}。
                {r.note && <Comment>{r.note}</Comment>}
              </li>
            ))}
          </HistoryList>
        </Fieldset>
      </DialogBody>
    </Dialog>
  );
};

export default function App() {
  return (
    <Screen>
      <Global />
      <Desktop><Wallpaper /><TaskButton /><TaskbarEnd /></Desktop>
      <Browser>
        <TabStrip>
          <TabList>
            {tabs.map((t) => (
              <BrowserTab key={t.title} $active={t.active}>
                {t.icon}
                <TabTitle>{t.title}</TabTitle>
                <TabClose type="button" aria-label="关闭标签页"><CrossIcon s={9} w={2} /></TabClose>
              </BrowserTab>
            ))}
            <NewTab type="button" aria-label="新标签页" />
          </TabList>
          <WindowButtons>
            <WindowButton type="button" $w={25} $gap aria-label="用户"><FaUser size={9} /></WindowButton>
            <WindowButton type="button" $w={26} aria-label="最小化"><svg width="11" height="4"><rect width="11" height="4" rx="1" fill="#fff" /></svg></WindowButton>
            <WindowButton type="button" $w={25} aria-label="还原"><svg width="12" height="12" fill="none" stroke="#fff" strokeWidth="1.500"><path d="M4 3V1h7v7H9M1 4h7v7H1zM3.500 6.500h2v2h-2z" /></svg></WindowButton>
            <WindowButton type="button" $w={42} aria-label="关闭"><CrossIcon s={11} w={2} /></WindowButton>
          </WindowButtons>
        </TabStrip>
        <Toolbar>
          <NavButton type="button" aria-label="后退"><svg width="16" height="16" fill="none" stroke="#444" strokeWidth="2.600"><path d="M15 8H2M8 2L2 8l6 6" /></svg></NavButton>
          <NavButton type="button" aria-label="前进"><svg width="16" height="16" fill="none" stroke="#c6c6c6" strokeWidth="2.200"><path d="M1 8h13M8 2l6 6-6 6" /></svg></NavButton>
          <NavButton type="button" aria-label="刷新"><svg width="16" height="16" fill="none"><path d="M13 11a6 6 0 1 1-.500-6.500" stroke="#444" strokeWidth="2.600" /><path d="M15 1v7H8z" fill="#444" /></svg></NavButton>
          <Omnibox>
            <PageIcon color="#8a8a8a" />
            <Url><UrlHost>172.20.7.101</UrlHost>/zentao/bug-view-181.html</Url>
            <svg width="18" height="18" viewBox="0 0 18 18" fill="none" stroke="#777"><path d="M9 1l2.300 5.300 5.700.5-4.300 3.800 1.300 5.700L9 13.300 4 16.300l1.300-5.700L1 6.800l5.700-.5z" /></svg>
          </Omnibox>
          <svg width="18" height="18" viewBox="0 0 18 18" fill="none"><path d="M1 3l8-2 8 2c0 7-3 11-8 14C4 14 1 10 1 3z" fill="#fff" stroke="#2b7de9" strokeWidth="2" /><path d="M4 6l4 6 6-5" stroke="#2b7de9" strokeWidth="2" /><circle cx="14.500" cy="3.500" r="3" fill="#e23b2e" /></svg>
          <MenuButton type="button" aria-label="菜单"><svg width="14" height="14" fill="#444"><rect y="0" width="14" height="3" rx="1" /><rect y="5" width="14" height="3" rx="1" /><rect y="10" width="14" height="3" rx="1" /></svg></MenuButton>
        </Toolbar>
        <Bookmarks>
          {bookmarks.map((b) => (
            <Bookmark key={b.text} href="#">
              <BookmarkIcon>{b.icon}</BookmarkIcon>
              <BookmarkText $fade={b.fade}>{b.text}</BookmarkText>
            </Bookmark>
          ))}
          <More type="button">»</More>
        </Bookmarks>
        <Viewport>
          <Page>
            <BugPage />
            <Backdrop><ModalFrame><ResolveDialog /></ModalFrame></Backdrop>
          </Page>
          <ScrollTrack>
            <ScrollArrow viewBox="0 0 9 17"><path d="M0 11h9L4.500 6z" fill="#a0a0a0" /></ScrollArrow>
            <ScrollThumb /><ScrollRest />
            <ScrollArrow viewBox="0 0 9 17"><path d="M0 6h9L4.500 11z" fill="#505050" /></ScrollArrow>
          </ScrollTrack>
        </Viewport>
      </Browser>
    </Screen>
  );
}
